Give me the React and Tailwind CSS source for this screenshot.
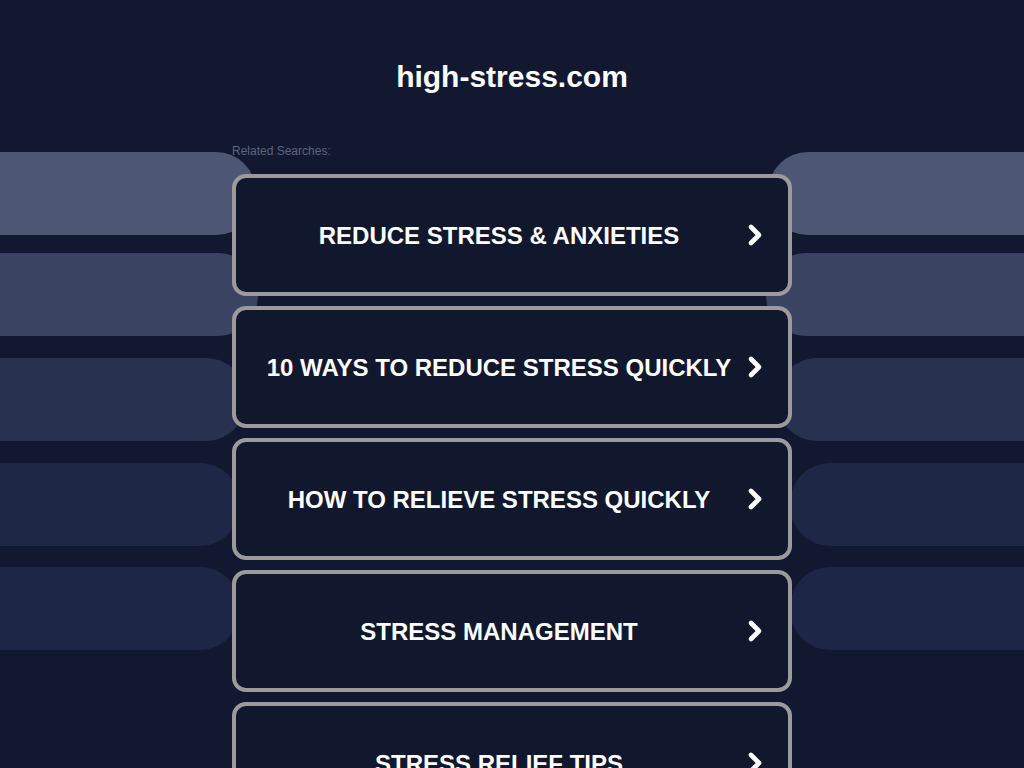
import { ChevronRight } from 'lucide-react';

const searches = [
  'REDUCE STRESS & ANXIETIES',
  '10 WAYS TO REDUCE STRESS QUICKLY',
  'HOW TO RELIEVE STRESS QUICKLY',
  'STRESS MANAGEMENT',
  'STRESS RELIEF TIPS',
];

// decorative bands behind the list, one per row
const bands = [
  { color: 'bg-[#4d5773]', left: 'w-[256px]', right: 'w-[256px]', gap: 'mt-0' },
  { color: 'bg-[#3a4362]', left: 'w-[258px]', right: 'w-[258px]', gap: 'mt-[18px]' },
  { color: 'bg-[#283150]', left: 'w-[246px]', right: 'w-[247px]', gap: 'mt-[22px]' },
  { color: 'bg-[#1f2746]', left: 'w-[240px]', right: 'w-[234px]', gap: 'mt-[22px]' },
  { color: 'bg-[#1d2647]', left: 'w-[240px]', right: 'w-[234px]', gap: 'mt-[21px]' },
];

function Card({ label }) {
  return (
    <a
      href="#"
      className="relative flex h-[122px] items-center rounded-[14px] border-4 border-[#9b9b9b] bg-[#11172c]"
    >
      <span className="mt-[2px] w-[526px] text-center text-[24px] font-bold text-white">{label}</span>
      <ChevronRight
        className="absolute right-[17px] top-1/2 h-[32px] w-[32px] -translate-y-1/2 text-white"
        strokeWidth={3.5}
      />
    </a>
  );
}

export default function App() {
  return (
    <div
      className="relative min-h-screen overflow-hidden bg-[#121830] pb-10"
      style={{ fontFamily: '"Liberation Sans", Arial, sans-serif' }}
    >
      <div className="absolute inset-x-0 top-[152px] flex flex-col">
        {bands.map((b, i) => (
          <div key={i} className={`flex h-[83px] justify-between ${b.gap}`}>
            <div className={`h-full rounded-r-[40px] ${b.left} ${b.color}`} />
            <div className={`h-full rounded-l-[40px] ${b.right} ${b.color}`} />
          </div>
        ))}
      </div>

      <div className="relative mx-auto w-[560px]">
        <h1 className="pt-[59px] text-center text-[30px] font-bold leading-[36px] text-white">
          high-stress.com
        </h1>
        <p className="mt-[49px] text-[12px] leading-[14px] text-[#5b6582]">Related Searches:</p>
        <div className="mt-[16px] flex flex-col gap-[10px]">
          {searches.map((s) => (
            <Card key={s} label={s} />
          ))}
        </div>
      </div>
    </div>
  );
}
